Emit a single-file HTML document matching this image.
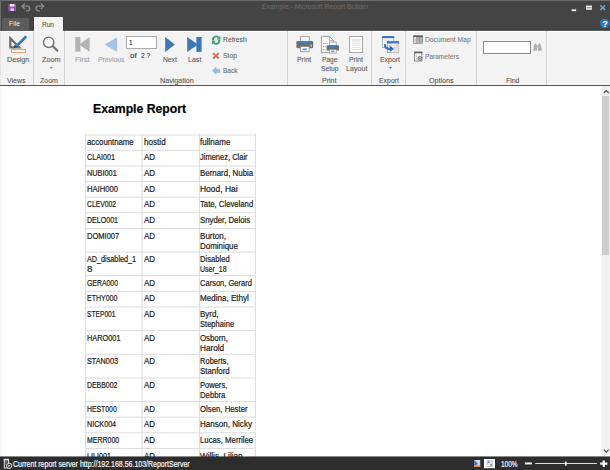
<!DOCTYPE html>
<html><head><meta charset="utf-8"><title>Example - Microsoft Report Builder</title>
<style>
html,body{margin:0;padding:0;width:610px;height:470px;overflow:hidden;background:#fff}
body{position:relative;font-family:"Liberation Sans", sans-serif}
.t{position:absolute;white-space:pre;transform-origin:0 0;display:block;-webkit-text-stroke:0.2px currentColor}
.a{position:absolute}
.ln{position:absolute;background:#dcdcdc}
svg{position:absolute;left:0;top:0;overflow:visible}
</style></head><body>
<div class="a" style="left:0;top:0;width:610px;height:31px;background:#444"></div>
<svg width="610" height="470" viewBox="0 0 610 470"><rect x="0" y="29.4" width="610" height="1.4" fill="#393939"/><rect x="33.2" y="16.8" width="30.8" height="14" fill="#3a3a3a"/><rect x="0" y="30.8" width="610" height="1" fill="#fbfbfb"/></svg>
<div class="a" style="left:0;top:0;width:610px;height:1px;background:#6a6a6a"></div>
<div class="a" style="left:0;top:0;width:1px;height:31px;background:#6a6a6a"></div>
<div class="a" style="left:0;top:31px;width:610px;height:54px;background:#f3f3f3"></div>
<div class="a" style="left:0;top:31px;width:610px;height:1px;background:#fbfbfb"></div>
<div class="a" style="left:0;top:85px;width:610px;height:1px;background:#555"></div>
<div class="a" style="left:2px;top:18px;width:27px;height:12px;background:#5c5c5c"></div>
<div class="a" style="left:34px;top:17px;width:29px;height:14px;background:#f3f3f3"></div>
<div class="a" style="left:0;top:32px;width:1px;height:53px;background:#e4e4e4"></div>
<div class="a" style="left:0;top:86px;width:1px;height:371px;background:#f2f2f8"></div>
<!-- group separators -->
<div class="a" style="left:33px;top:31px;width:1px;height:54px;background:#d4d4d4"></div>
<div class="a" style="left:64px;top:31px;width:1px;height:54px;background:#d4d4d4"></div>
<div class="a" style="left:287px;top:31px;width:1px;height:54px;background:#d4d4d4"></div>
<div class="a" style="left:371px;top:31px;width:1px;height:54px;background:#d4d4d4"></div>
<div class="a" style="left:405px;top:31px;width:1px;height:54px;background:#d4d4d4"></div>
<div class="a" style="left:476px;top:31px;width:1px;height:54px;background:#d4d4d4"></div>
<div class="a" style="left:546px;top:31px;width:1px;height:54px;background:#d4d4d4"></div>
<!-- text boxes -->
<div class="a" style="left:126.2px;top:36.4px;width:30.5px;height:12.3px;background:#fff;border:1px solid #aaa;box-sizing:border-box"></div>
<div class="a" style="left:483px;top:41px;width:48px;height:12.5px;background:#fff;border:1px solid #8c8c8c;box-sizing:border-box"></div>
<!-- scrollbar -->
<svg width="610" height="470" viewBox="0 0 610 470"><rect x="601.6" y="86" width="8.4" height="368.5" fill="#f0f0f0"/></svg>
<div class="a" style="left:602px;top:96px;width:7px;height:159px;background:#cdcdcd"></div>
<svg width="610" height="470" viewBox="0 0 610 470">
<!-- scrollbar arrows -->
<path d="M603.9 93 L606.3 90.5 L608.7 93" fill="none" stroke="#505050" stroke-width="1.2"/>
<path d="M603.9 449.6 L606.3 452.1 L608.7 449.6" fill="none" stroke="#505050" stroke-width="1.2"/>
<!-- quick access: save -->
<rect x="8.5" y="4" width="7.5" height="7" fill="#9b4fc4"/>
<rect x="10" y="4" width="4.5" height="2.6" fill="#f2e8f8"/>
<rect x="10.6" y="8.3" width="3.3" height="2.7" fill="#e0c8ee"/>
<!-- undo / redo -->
<path d="M22.2 6.2 H27.4 A2.35 2.35 0 0 1 27.4 10.9 H26" fill="none" stroke="#8c8c8c" stroke-width="1.25"/>
<path d="M24.9 3.4 L22.1 6.2 L24.9 9" fill="none" stroke="#8c8c8c" stroke-width="1.25"/>
<path d="M43.6 6.2 H38.4 A2.35 2.35 0 0 0 38.4 10.9 H39.8" fill="none" stroke="#8c8c8c" stroke-width="1.25"/>
<path d="M40.9 3.4 L43.7 6.2 L40.9 9" fill="none" stroke="#8c8c8c" stroke-width="1.25"/>
<!-- window controls -->
<rect x="571.7" y="9.3" width="4.4" height="1.9" fill="#f4f4f8"/>
<rect x="586" y="5.8" width="5.9" height="4.1" fill="#d4d4d4"/>
<rect x="586" y="5.7" width="5.9" height="1.6" fill="#f6f6f6"/>
<rect x="586.4" y="7.4" width="5.1" height="0.6" fill="#777"/>
<path d="M600.3 5.4 L605.2 10 M605.2 5.4 L600.3 10" stroke="#8ba9d2" stroke-width="1.25" fill="none"/>
<!-- help -->
<circle cx="604.8" cy="23.5" r="4.8" fill="#3075bd"/>
<text x="604.9" y="26.8" font-family="Liberation Sans, sans-serif" font-size="9" font-weight="700" fill="#fff" text-anchor="middle">?</text>

<!-- Design icon -->
<path fill-rule="evenodd" d="M9.2 35.4 L9.2 48.4 L21.8 48.4 Z M11.4 40.9 L11.4 46.3 L16.6 46.3 Z" fill="#6c6c6c"/>
<path d="M26.3 36.4 L15.3 47.2" stroke="#2f74c8" stroke-width="2.7" fill="none"/>
<path d="M25.3 35.9 L14.6 46.4" stroke="#6ea2e0" stroke-width="0.6" fill="none"/>
<path d="M16.6 46.4 L13.7 48.6 L14.6 45 Z" fill="#3a3a3a"/>
<rect x="11.3" y="49.3" width="14.3" height="3.2" fill="#fff" stroke="#e8924a" stroke-width="0.8"/>
<path d="M12.5 50.2 H24.5" stroke="#f2b98a" stroke-width="0.8" stroke-dasharray="0.8 0.8"/>
<!-- Zoom icon -->
<circle cx="48.7" cy="42.3" r="5.2" fill="#f8f8f8" stroke="#6e6e6e" stroke-width="1.4"/>
<path d="M52.6 46.1 L58 51.3" stroke="#6e6e6e" stroke-width="2.1" fill="none"/>
<path d="M49.6 67.2 H52.6 L51.1 69 Z" fill="#3a72c0"/>
<!-- First -->
<rect x="75.2" y="37" width="5.2" height="14.7" fill="#b4b4b4"/>
<path d="M79 44.4 L89.6 36.9 L89.6 51.8 Z" fill="#b4b4b4"/>
<!-- Previous -->
<path d="M104.6 44.5 L117.1 37.2 L117.1 52 Z" fill="#a9c1ea"/>
<!-- Next -->
<path d="M174.9 44.4 L165.2 37 L165.2 51.9 Z" fill="#3b78b9"/>
<!-- Last -->
<path d="M198 44.4 L187.2 36.9 L187.2 52 Z" fill="#3b78b9"/>
<rect x="196.4" y="37" width="5.2" height="14.9" fill="#3b78b9"/>
<!-- Refresh -->
<path d="M213.1 40.6 A3.2 3.2 0 0 1 218.6 37.6" fill="none" stroke="#43a076" stroke-width="1.9"/>
<path d="M219.3 39.6 A3.2 3.2 0 0 1 213.8 42.6" fill="none" stroke="#43a076" stroke-width="1.9"/>
<path d="M216.6 39.4 L220.4 39.4 L220.4 35.6 Z" fill="#43a076"/>
<path d="M215.8 40.8 L212 40.8 L212 44.6 Z" fill="#43a076"/>
<!-- Stop -->
<path d="M213 53.2 L218.8 58.5 M218.8 53.2 L213 58.5" stroke="#e4675a" stroke-width="1.8" fill="none"/>
<!-- Back -->
<path d="M212.2 70.7 L216 67.2 L216 69.2 L219.9 69.2 L219.9 72.4 L216 72.4 L216 74.2 Z" fill="#9dbbe8" stroke="#7fa5dc" stroke-width="0.5"/>
<!-- Print icon -->
<rect x="300.6" y="36.7" width="8.6" height="5" fill="#fff" stroke="#8a8a8a" stroke-width="0.8"/>
<rect x="296.4" y="41" width="16.8" height="7.3" rx="1.2" fill="#6e6e6e"/>
<path d="M300 40.9 H309.8 L310.4 43.3 H299.4 Z" fill="#3f7fc8"/>
<rect x="300.6" y="46.6" width="8.6" height="5.1" fill="#fff" stroke="#8a8a8a" stroke-width="0.8"/>
<rect x="302.8" y="48.4" width="4" height="1.8" fill="#5a92d4"/>
<rect x="310.6" y="44.6" width="1.3" height="2" fill="#ddd"/>
<!-- Page setup icon -->
<path d="M321.5 36.4 H329.4 L333.6 40.6 V52.5 H321.5 Z" fill="#fff" stroke="#8a8a8a" stroke-width="0.8"/>
<path d="M329.4 36.4 V40.6 H333.6" fill="none" stroke="#8a8a8a" stroke-width="0.7"/>
<path d="M323.2 43.6 H324.4 M323.2 46.7 H324.4 M323.2 49.8 H324.4" stroke="#555" stroke-width="0.9"/>
<path d="M325 43.6 H328 M325 46.7 H327 M325 49.8 H327" stroke="#b0b0b0" stroke-width="0.7"/>
<rect x="329.3" y="42.1" width="6.9" height="3.8" fill="#fff" stroke="#8a8a8a" stroke-width="0.7"/>
<rect x="326.6" y="45.2" width="12.4" height="5.4" rx="0.9" fill="#6e6e6e"/>
<path d="M329 45.1 H336.6 L337 46.9 H328.6 Z" fill="#3f7fc8"/>
<rect x="329.4" y="49.5" width="6.8" height="3.6" fill="#fff" stroke="#8a8a8a" stroke-width="0.7"/>
<rect x="331.2" y="50.6" width="3.2" height="1.5" fill="#5a92d4"/>
<!-- Print layout icon -->
<rect x="349.6" y="36.5" width="13" height="16.1" fill="#fff" stroke="#9a9a9a" stroke-width="0.9"/>
<rect x="351.9" y="38.9" width="8.8" height="2.9" fill="#e6e6e6"/>
<path d="M351.9 43.3 H360.7 M351.9 45.3 H360.7 M351.9 47.4 H360.7 M351.9 49.5 H360.7" stroke="#d6d6d6" stroke-width="0.8"/>
<!-- Export icon -->
<rect x="382.5" y="36.4" width="11.3" height="11.1" fill="#fafafa" stroke="#9a9a9a" stroke-width="0.7"/>
<rect x="382.1" y="36" width="12" height="2.2" fill="#3a78c4"/>
<path d="M384 40.3 H392 M384 42.3 H392 M384 44.3 H392 M386.3 38.4 V47.4" stroke="#d8d8d8" stroke-width="0.6"/>
<rect x="387.4" y="41.6" width="11.3" height="11.1" fill="#fafafa" stroke="#9a9a9a" stroke-width="0.7"/>
<rect x="387" y="41.2" width="12" height="2.3" fill="#3a78c4"/>
<rect x="393.6" y="43.8" width="4.8" height="8.4" fill="#e4e4e4"/>
<path d="M389 45.6 H398 M389 47.6 H398 M389 49.6 H398 M391.3 43.6 V52.4" stroke="#d4d4d4" stroke-width="0.6"/>
<path d="M384.9 44.3 C384.9 48.4 386.6 49 390.6 49" fill="none" stroke="#2b6cc0" stroke-width="2.1"/>
<path d="M389.7 45.6 L394 48.9 L389.7 52 Z" fill="#2b6cc0"/>
<path d="M389 67.2 H392 L390.5 69 Z" fill="#3a72c0"/>
<!-- Document map icon -->
<rect x="413.7" y="36" width="8.8" height="7.2" fill="#fff" stroke="#6e6e6e" stroke-width="0.8"/>
<rect x="416.4" y="37" width="5.8" height="5.8" fill="#b4b4b4"/>
<rect x="413.3" y="35.5" width="9.6" height="1.6" fill="#5e5e5e"/>
<path d="M416.3 37 V43 M419.4 37 V43" stroke="#7a7a7a" stroke-width="0.6"/>
<path d="M415 38.6 V41.4" stroke="#888" stroke-width="0.6"/>
<!-- Parameters icon -->
<rect x="414.5" y="52.2" width="7.4" height="8.8" fill="#fff" stroke="#6e6e6e" stroke-width="0.8"/>
<rect x="414.1" y="51.7" width="8.2" height="1.6" fill="#5e5e5e"/>
<circle cx="419.8" cy="58.4" r="1.9" fill="#c8c8c8" stroke="#666" stroke-width="0.9"/>
<circle cx="419.8" cy="58.4" r="0.6" fill="#666"/>
<path d="M415.8 56 H417 M415.8 58.8 H417" stroke="#777" stroke-width="0.8"/>
<!-- binoculars -->
<path d="M533 50.8 L534.2 44.8 L535.4 43 L536.8 44.8 L537.1 50.8 Z M537.9 50.8 L538.2 44.8 L539.6 43 L540.8 44.8 L542 50.8 Z" fill="#b0b0b0"/>
<rect x="536.6" y="45.4" width="1.8" height="1.8" fill="#b0b0b0"/>
</svg>

<svg width="610" height="470" viewBox="0 0 610 470">
<rect x="85" y="134.55" width="171" height="1" fill="#dcdcdc"/>
<rect x="85" y="149.82" width="171" height="1" fill="#dcdcdc"/>
<rect x="85" y="165.44" width="171" height="1" fill="#dcdcdc"/>
<rect x="85" y="181.06" width="171" height="1" fill="#dcdcdc"/>
<rect x="85" y="196.68" width="171" height="1" fill="#dcdcdc"/>
<rect x="85" y="212.30" width="171" height="1" fill="#dcdcdc"/>
<rect x="85" y="227.92" width="171" height="1" fill="#dcdcdc"/>
<rect x="85" y="251.57" width="171" height="1" fill="#dcdcdc"/>
<rect x="85" y="275.22" width="171" height="1" fill="#dcdcdc"/>
<rect x="85" y="290.84" width="171" height="1" fill="#dcdcdc"/>
<rect x="85" y="306.46" width="171" height="1" fill="#dcdcdc"/>
<rect x="85" y="330.11" width="171" height="1" fill="#dcdcdc"/>
<rect x="85" y="353.76" width="171" height="1" fill="#dcdcdc"/>
<rect x="85" y="377.41" width="171" height="1" fill="#dcdcdc"/>
<rect x="85" y="401.06" width="171" height="1" fill="#dcdcdc"/>
<rect x="85" y="416.68" width="171" height="1" fill="#dcdcdc"/>
<rect x="85" y="432.30" width="171" height="1" fill="#dcdcdc"/>
<rect x="85" y="447.92" width="171" height="1" fill="#dcdcdc"/>
<rect x="85.00" y="134.2" width="1" height="322.80" fill="#dcdcdc"/>
<rect x="141.50" y="134.2" width="1" height="322.80" fill="#dcdcdc"/>
<rect x="198.90" y="134.2" width="1" height="322.80" fill="#dcdcdc"/>
<rect x="254.90" y="134.2" width="1" height="322.80" fill="#dcdcdc"/>
</svg>
<span class="t" style="left:262.35px;top:3.27px;font-size:7.5px;line-height:7.5px;color:#6a6a6a;transform:scaleX(0.9153);-webkit-text-stroke:0">Example - Microsoft Report Builder</span>
<span class="t" style="left:9.45px;top:20.37px;font-size:7.5px;line-height:7.5px;color:#ececec;transform:scaleX(0.9054);-webkit-text-stroke:0">File</span>
<span class="t" style="left:41.95px;top:20.57px;font-size:7.5px;line-height:7.5px;color:#555;transform:scaleX(0.8681);-webkit-text-stroke:0.1px currentColor">Run</span>
<span class="t" style="left:7.15px;top:55.77px;font-size:7.5px;line-height:7.5px;color:#5a5a5a;transform:scaleX(0.9525);-webkit-text-stroke:0.1px currentColor">Design</span>
<span class="t" style="left:7.45px;top:76.77px;font-size:7.5px;line-height:7.5px;color:#5a5a5a;transform:scaleX(0.9333);-webkit-text-stroke:0.1px currentColor">Views</span>
<span class="t" style="left:41.55px;top:55.77px;font-size:7.5px;line-height:7.5px;color:#5a5a5a;transform:scaleX(0.9623);-webkit-text-stroke:0.1px currentColor">Zoom</span>
<span class="t" style="left:40.45px;top:76.77px;font-size:7.5px;line-height:7.5px;color:#5a5a5a;transform:scaleX(0.9311);-webkit-text-stroke:0.1px currentColor">Zoom</span>
<span class="t" style="left:74.65px;top:55.77px;font-size:7.5px;line-height:7.5px;color:#a2a2a2;transform:scaleX(0.9970);-webkit-text-stroke:0.1px currentColor">First</span>
<span class="t" style="left:97.65px;top:55.77px;font-size:7.5px;line-height:7.5px;color:#a2a2a2;transform:scaleX(0.9028);-webkit-text-stroke:0.1px currentColor">Previous</span>
<span class="t" style="left:128.75px;top:38.97px;font-size:7.5px;line-height:7.5px;color:#222;transform:scaleX(0.8509);-webkit-text-stroke:0.1px currentColor">1</span>
<span class="t" style="left:130.05px;top:51.97px;font-size:7.5px;line-height:7.5px;color:#333;transform:scaleX(1.0773);-webkit-text-stroke:0.1px currentColor">of</span>
<span class="t" style="left:140.55px;top:51.97px;font-size:7.5px;line-height:7.5px;color:#333;transform:scaleX(0.8862);-webkit-text-stroke:0.1px currentColor">2 ?</span>
<span class="t" style="left:162.55px;top:55.77px;font-size:7.5px;line-height:7.5px;color:#5a5a5a;transform:scaleX(0.8981);-webkit-text-stroke:0.1px currentColor">Next</span>
<span class="t" style="left:187.65px;top:55.77px;font-size:7.5px;line-height:7.5px;color:#5a5a5a;transform:scaleX(0.9410);-webkit-text-stroke:0.1px currentColor">Last</span>
<span class="t" style="left:160.25px;top:76.77px;font-size:7.5px;line-height:7.5px;color:#5a5a5a;transform:scaleX(0.9520);-webkit-text-stroke:0.1px currentColor">Navigation</span>
<span class="t" style="left:223.25px;top:35.57px;font-size:7.5px;line-height:7.5px;color:#5a5a5a;transform:scaleX(0.9004);-webkit-text-stroke:0.1px currentColor">Refresh</span>
<span class="t" style="left:223.25px;top:52.07px;font-size:7.5px;line-height:7.5px;color:#6a6a6a;transform:scaleX(0.9101);-webkit-text-stroke:0.1px currentColor">Stop</span>
<span class="t" style="left:223.25px;top:66.67px;font-size:7.5px;line-height:7.5px;color:#6a6a6a;transform:scaleX(0.8659);-webkit-text-stroke:0.1px currentColor">Back</span>
<span class="t" style="left:297.45px;top:55.77px;font-size:7.5px;line-height:7.5px;color:#5a5a5a;transform:scaleX(0.9175);-webkit-text-stroke:0.1px currentColor">Print</span>
<span class="t" style="left:322.05px;top:55.77px;font-size:7.5px;line-height:7.5px;color:#5a5a5a;transform:scaleX(0.8756);-webkit-text-stroke:0.1px currentColor">Page</span>
<span class="t" style="left:320.95px;top:65.07px;font-size:7.5px;line-height:7.5px;color:#5a5a5a;transform:scaleX(0.8950);-webkit-text-stroke:0.1px currentColor">Setup</span>
<span class="t" style="left:322.45px;top:76.77px;font-size:7.5px;line-height:7.5px;color:#5a5a5a;transform:scaleX(0.9370);-webkit-text-stroke:0.1px currentColor">Print</span>
<span class="t" style="left:349.25px;top:55.77px;font-size:7.5px;line-height:7.5px;color:#5a5a5a;transform:scaleX(0.8981);-webkit-text-stroke:0.1px currentColor">Print</span>
<span class="t" style="left:345.55px;top:65.07px;font-size:7.5px;line-height:7.5px;color:#5a5a5a;transform:scaleX(0.9520);-webkit-text-stroke:0.1px currentColor">Layout</span>
<span class="t" style="left:380.45px;top:55.77px;font-size:7.5px;line-height:7.5px;color:#5a5a5a;transform:scaleX(0.9245);-webkit-text-stroke:0.1px currentColor">Export</span>
<span class="t" style="left:379.15px;top:76.77px;font-size:7.5px;line-height:7.5px;color:#5a5a5a;transform:scaleX(0.9245);-webkit-text-stroke:0.1px currentColor">Export</span>
<span class="t" style="left:425.35px;top:35.97px;font-size:7.5px;line-height:7.5px;color:#7c7c7c;transform:scaleX(0.8995);-webkit-text-stroke:0.1px currentColor">Document Map</span>
<span class="t" style="left:425.35px;top:53.17px;font-size:7.5px;line-height:7.5px;color:#7c7c7c;transform:scaleX(0.8758);-webkit-text-stroke:0.1px currentColor">Parameters</span>
<span class="t" style="left:429.45px;top:76.77px;font-size:7.5px;line-height:7.5px;color:#5a5a5a;transform:scaleX(0.9532);-webkit-text-stroke:0.1px currentColor">Options</span>
<span class="t" style="left:505.65px;top:76.77px;font-size:7.5px;line-height:7.5px;color:#5a5a5a;transform:scaleX(0.9216);-webkit-text-stroke:0.1px currentColor">Find</span>
<span class="t" style="left:92.68px;top:102.63px;font-size:12px;line-height:12px;color:#000;transform:scaleX(1.0191);font-weight:700">Example Report</span>
<span class="t" style="left:86.91px;top:138.99px;font-size:8.2px;line-height:8.2px;color:#222;transform:scaleX(0.9481)">accountname</span>
<span class="t" style="left:143.51px;top:138.99px;font-size:8.2px;line-height:8.2px;color:#222;transform:scaleX(0.9902)">hostid</span>
<span class="t" style="left:200.41px;top:138.99px;font-size:8.2px;line-height:8.2px;color:#222;transform:scaleX(0.9812)">fullname</span>
<span class="t" style="left:86.91px;top:154.41px;font-size:8.2px;line-height:8.2px;color:#222;transform:scaleX(0.8744)">CLAI001</span>
<span class="t" style="left:143.51px;top:154.41px;font-size:8.2px;line-height:8.2px;color:#222;transform:scaleX(0.9688)">AD</span>
<span class="t" style="left:200.41px;top:154.41px;font-size:8.2px;line-height:8.2px;color:#222;transform:scaleX(0.9170)">Jimenez, Clair</span>
<span class="t" style="left:86.91px;top:170.03px;font-size:8.2px;line-height:8.2px;color:#222;transform:scaleX(0.8950)">NUBI001</span>
<span class="t" style="left:143.51px;top:170.03px;font-size:8.2px;line-height:8.2px;color:#222;transform:scaleX(0.9688)">AD</span>
<span class="t" style="left:200.41px;top:170.03px;font-size:8.2px;line-height:8.2px;color:#222;transform:scaleX(0.9658)">Bernard, Nubia</span>
<span class="t" style="left:86.91px;top:185.65px;font-size:8.2px;line-height:8.2px;color:#222;transform:scaleX(0.9326)">HAIH000</span>
<span class="t" style="left:143.51px;top:185.65px;font-size:8.2px;line-height:8.2px;color:#222;transform:scaleX(0.9688)">AD</span>
<span class="t" style="left:200.41px;top:185.65px;font-size:8.2px;line-height:8.2px;color:#222;transform:scaleX(1.0315)">Hood, Hai</span>
<span class="t" style="left:86.91px;top:201.27px;font-size:8.2px;line-height:8.2px;color:#222;transform:scaleX(0.8305)">CLEV002</span>
<span class="t" style="left:143.51px;top:201.27px;font-size:8.2px;line-height:8.2px;color:#222;transform:scaleX(0.9688)">AD</span>
<span class="t" style="left:200.41px;top:201.27px;font-size:8.2px;line-height:8.2px;color:#222;transform:scaleX(0.9425)">Tate, Cleveland</span>
<span class="t" style="left:86.91px;top:216.89px;font-size:8.2px;line-height:8.2px;color:#222;transform:scaleX(0.8617)">DELO001</span>
<span class="t" style="left:143.51px;top:216.89px;font-size:8.2px;line-height:8.2px;color:#222;transform:scaleX(0.9688)">AD</span>
<span class="t" style="left:200.41px;top:216.89px;font-size:8.2px;line-height:8.2px;color:#222;transform:scaleX(0.9484)">Snyder, Delois</span>
<span class="t" style="left:86.91px;top:232.51px;font-size:8.2px;line-height:8.2px;color:#222;transform:scaleX(0.9201)">DOMI007</span>
<span class="t" style="left:143.51px;top:232.51px;font-size:8.2px;line-height:8.2px;color:#222;transform:scaleX(0.9688)">AD</span>
<span class="t" style="left:200.41px;top:232.51px;font-size:8.2px;line-height:8.2px;color:#222;transform:scaleX(0.9844)">Burton,</span>
<span class="t" style="left:200.41px;top:242.51px;font-size:8.2px;line-height:8.2px;color:#222;transform:scaleX(0.9675)">Dominique</span>
<span class="t" style="left:86.91px;top:256.16px;font-size:8.2px;line-height:8.2px;color:#222;transform:scaleX(0.8843)">AD_disabled_1</span>
<span class="t" style="left:86.91px;top:266.16px;font-size:8.2px;line-height:8.2px;color:#222;transform:scaleX(1.1770)">8</span>
<span class="t" style="left:143.51px;top:256.16px;font-size:8.2px;line-height:8.2px;color:#222;transform:scaleX(0.9688)">AD</span>
<span class="t" style="left:200.41px;top:256.16px;font-size:8.2px;line-height:8.2px;color:#222;transform:scaleX(0.9336)">Disabled</span>
<span class="t" style="left:200.41px;top:266.16px;font-size:8.2px;line-height:8.2px;color:#222;transform:scaleX(0.8600)">User_18</span>
<span class="t" style="left:86.91px;top:279.81px;font-size:8.2px;line-height:8.2px;color:#222;transform:scaleX(0.8405)">GERA000</span>
<span class="t" style="left:143.51px;top:279.81px;font-size:8.2px;line-height:8.2px;color:#222;transform:scaleX(0.9688)">AD</span>
<span class="t" style="left:200.41px;top:279.81px;font-size:8.2px;line-height:8.2px;color:#222;transform:scaleX(0.9204)">Carson, Gerard</span>
<span class="t" style="left:86.91px;top:295.43px;font-size:8.2px;line-height:8.2px;color:#222;transform:scaleX(0.8555)">ETHY000</span>
<span class="t" style="left:143.51px;top:295.43px;font-size:8.2px;line-height:8.2px;color:#222;transform:scaleX(0.9688)">AD</span>
<span class="t" style="left:200.41px;top:295.43px;font-size:8.2px;line-height:8.2px;color:#222;transform:scaleX(0.9841)">Medina, Ethyl</span>
<span class="t" style="left:86.91px;top:311.05px;font-size:8.2px;line-height:8.2px;color:#222;transform:scaleX(0.8131)">STEP001</span>
<span class="t" style="left:143.51px;top:311.05px;font-size:8.2px;line-height:8.2px;color:#222;transform:scaleX(0.9688)">AD</span>
<span class="t" style="left:200.41px;top:311.05px;font-size:8.2px;line-height:8.2px;color:#222;transform:scaleX(0.9671)">Byrd,</span>
<span class="t" style="left:200.41px;top:321.05px;font-size:8.2px;line-height:8.2px;color:#222;transform:scaleX(0.9249)">Stephaine</span>
<span class="t" style="left:86.91px;top:334.70px;font-size:8.2px;line-height:8.2px;color:#222;transform:scaleX(0.8973)">HARO001</span>
<span class="t" style="left:143.51px;top:334.70px;font-size:8.2px;line-height:8.2px;color:#222;transform:scaleX(0.9688)">AD</span>
<span class="t" style="left:200.41px;top:334.70px;font-size:8.2px;line-height:8.2px;color:#222;transform:scaleX(0.9569)">Osborn,</span>
<span class="t" style="left:200.41px;top:344.70px;font-size:8.2px;line-height:8.2px;color:#222;transform:scaleX(0.9998)">Harold</span>
<span class="t" style="left:86.91px;top:358.35px;font-size:8.2px;line-height:8.2px;color:#222;transform:scaleX(0.8883)">STAN003</span>
<span class="t" style="left:143.51px;top:358.35px;font-size:8.2px;line-height:8.2px;color:#222;transform:scaleX(0.9688)">AD</span>
<span class="t" style="left:200.41px;top:358.35px;font-size:8.2px;line-height:8.2px;color:#222;transform:scaleX(0.9206)">Roberts,</span>
<span class="t" style="left:200.41px;top:368.35px;font-size:8.2px;line-height:8.2px;color:#222;transform:scaleX(0.9610)">Stanford</span>
<span class="t" style="left:86.91px;top:382.00px;font-size:8.2px;line-height:8.2px;color:#222;transform:scaleX(0.8443)">DEBB002</span>
<span class="t" style="left:143.51px;top:382.00px;font-size:8.2px;line-height:8.2px;color:#222;transform:scaleX(0.9688)">AD</span>
<span class="t" style="left:200.41px;top:382.00px;font-size:8.2px;line-height:8.2px;color:#222;transform:scaleX(0.9211)">Powers,</span>
<span class="t" style="left:200.41px;top:392.00px;font-size:8.2px;line-height:8.2px;color:#222;transform:scaleX(0.9445)">Debbra</span>
<span class="t" style="left:86.91px;top:405.65px;font-size:8.2px;line-height:8.2px;color:#222;transform:scaleX(0.8379)">HEST000</span>
<span class="t" style="left:143.51px;top:405.65px;font-size:8.2px;line-height:8.2px;color:#222;transform:scaleX(0.9688)">AD</span>
<span class="t" style="left:200.41px;top:405.65px;font-size:8.2px;line-height:8.2px;color:#222;transform:scaleX(0.9502)">Olsen, Hester</span>
<span class="t" style="left:86.91px;top:421.27px;font-size:8.2px;line-height:8.2px;color:#222;transform:scaleX(0.8762)">NICK004</span>
<span class="t" style="left:143.51px;top:421.27px;font-size:8.2px;line-height:8.2px;color:#222;transform:scaleX(0.9688)">AD</span>
<span class="t" style="left:200.41px;top:421.27px;font-size:8.2px;line-height:8.2px;color:#222;transform:scaleX(0.9839)">Hanson, Nicky</span>
<span class="t" style="left:86.91px;top:436.89px;font-size:8.2px;line-height:8.2px;color:#222;transform:scaleX(0.8535)">MERR000</span>
<span class="t" style="left:143.51px;top:436.89px;font-size:8.2px;line-height:8.2px;color:#222;transform:scaleX(0.9688)">AD</span>
<span class="t" style="left:200.41px;top:436.89px;font-size:8.2px;line-height:8.2px;color:#222;transform:scaleX(0.9502)">Lucas, Merrilee</span>
<span class="t" style="left:86.91px;top:452.51px;font-size:8.2px;line-height:8.2px;color:#222;transform:scaleX(0.8826)">LILI001</span>
<span class="t" style="left:143.51px;top:452.51px;font-size:8.2px;line-height:8.2px;color:#222;transform:scaleX(0.9688)">AD</span>
<span class="t" style="left:200.41px;top:452.51px;font-size:8.2px;line-height:8.2px;color:#222;transform:scaleX(0.9954)">Willis, Lilian</span>
<svg width="610" height="470" viewBox="0 0 610 470"><rect x="0" y="456.45" width="610" height="13.6" fill="#2d2d2d"/></svg>
<svg width="610" height="470" viewBox="0 0 610 470">
<!-- status icon left -->
<rect x="4.3" y="459.4" width="4.2" height="8.6" fill="none" stroke="#e4e4e4" stroke-width="1"/>
<rect x="3.8" y="458.9" width="5.2" height="1.5" fill="#e8e8e8"/>
<path d="M5.2 462 H7.6 M5.2 464 H6.4" stroke="#bbb" stroke-width="0.9"/>
<circle cx="9.2" cy="465.8" r="2.6" fill="#2d2d2d" stroke="#e8e8e8" stroke-width="1"/>
<path d="M8.4 464.5 L10.6 465.8 L8.4 467.1 Z" fill="#fff"/>
<!-- view icons -->
<rect x="474.2" y="460" width="6" height="7" fill="#d8d8d8"/>
<path d="M474.2 460 L478 464 L474.2 466 Z" fill="#3a6fb8"/>
<rect x="474.2" y="465.4" width="6" height="1.6" fill="#e08a3c"/>
<rect x="484" y="459" width="11" height="9.2" fill="#fff"/>
<rect x="487" y="460.8" width="5.4" height="5.6" fill="#e8e8e8" stroke="#aaa" stroke-width="0.6"/>
<rect x="487.6" y="461.4" width="2" height="1.6" fill="#5a8fd0"/>
<rect x="490" y="464" width="2" height="1.8" fill="#6ab08a"/>
<!-- zoom slider -->
<rect x="524.8" y="462.5" width="7.2" height="1.9" fill="#fff"/>
<rect x="535.2" y="463" width="61.7" height="0.9" fill="#f0f0f0"/>
<rect x="564.9" y="461.5" width="1.8" height="4.2" fill="#f0f0f0"/>
<path d="M600.2 463.7 H607.4 M603.8 460.4 V467" stroke="#fff" stroke-width="2.2" fill="none"/>
</svg>

<span class="t" style="left:13.41px;top:461.09px;font-size:8.2px;line-height:8.2px;color:#f4f4f4;transform:scaleX(0.8548)">Current report server http://192.168.56.103/ReportServer</span>
<span class="t" style="left:501.21px;top:461.09px;font-size:8.2px;line-height:8.2px;color:#f4f4f4;transform:scaleX(0.7884)">100%</span>
</body></html>
